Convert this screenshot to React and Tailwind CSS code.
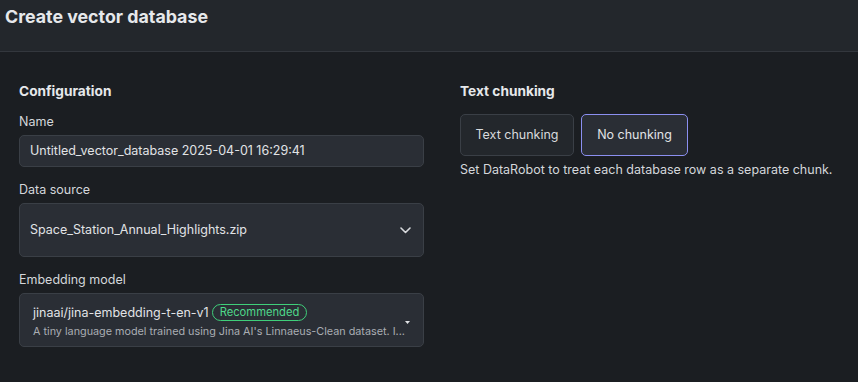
import React from "react";

export default function App() {
  return (
    <div className="w-[858px] h-[382px] bg-[#1b1e22] text-[#e3e5e8] overflow-hidden" style={{ fontFamily: "Inter, 'Noto Sans', sans-serif" }}>
      <div className="h-[52px] bg-[#23272c] border-b border-[#33373d] flex items-start pl-[5px] pt-[4px]">
        <h1 className="text-[17.8px] leading-[26px] font-bold text-[#e6e8eb]">Create vector database</h1>
      </div>
      <div className="flex pl-[19px] pt-[30px]">
        <div className="w-[405px] flex flex-col">
          <div className="text-[13.7px] leading-[18px] font-bold text-[#e6e8eb]">Configuration</div>
          <label className="mt-[13px] text-[12.5px] leading-[18px] text-[#d4d7db]">Name</label>
          <div className="mt-[4px] h-[32px] rounded-[5px] bg-[#2a2e35] border border-[#3a3f46] flex items-center px-[10px] text-[12.5px] text-[#e1e3e6]">
            Untitled_vector_database 2025-04-01 16:29:41
          </div>
          <label className="mt-[14px] text-[12.5px] leading-[18px] text-[#d4d7db]">Data source</label>
          <div className="mt-[4px] h-[54px] rounded-[5px] bg-[#2a2e35] border border-[#3a3f46] flex items-center justify-between pl-[10px] pr-[12px] text-[12.5px] text-[#e1e3e6]">
            <span>Space_Station_Annual_Highlights.zip</span>
            <svg width="11" height="7" viewBox="0 0 11 7" fill="none">
              <path d="M1 1l4.5 4.5L10 1" stroke="#d8dadd" strokeWidth="1.6" strokeLinecap="round" strokeLinejoin="round" />
            </svg>
          </div>
          <label className="mt-[14px] text-[12.5px] leading-[18px] text-[#d4d7db]">Embedding model</label>
          <div className="mt-[4px] h-[54px] rounded-[5px] bg-[#2a2e35] border border-[#3a3f46] flex items-center justify-between pl-[13px] pr-[13px] pt-[3px]">
            <div className="flex flex-col min-w-0">
              <div className="flex items-center gap-[3px] text-[12.5px] leading-[18px] text-[#e1e3e6]">
                <span>jinaai/jina-embedding-t-en-v1</span>
                <span className="border border-[#3fcf7a] text-[#4fd88a] rounded-full px-[7px] text-[11.2px] leading-[15px]">Recommended</span>
              </div>
              <div className="text-[10.8px] leading-[16px] text-[#a9adb3] mt-[2px] whitespace-nowrap">
                A tiny language model trained using Jina AI's Linnaeus-Clean dataset. I...
              </div>
            </div>
            <svg width="5" height="3" viewBox="0 0 5 3" className="mt-[2px]">
              <path d="M0 0h5L2.5 3z" fill="#e1e3e6" />
            </svg>
          </div>
        </div>
        <div className="ml-[36px] flex flex-col">
          <div className="text-[13.7px] leading-[18px] font-bold text-[#e6e8eb]">Text chunking</div>
          <div className="mt-[14px] flex gap-[7px]">
            <div className="h-[42px] w-[114px] rounded-[5px] bg-[#23272c] border border-[#3a3f46] flex items-center justify-center text-[12.5px] text-[#d8dadd]">Text chunking</div>
            <div className="h-[42px] w-[107px] rounded-[5px] bg-[#2a2e35] border border-[#8b8ff0] flex items-center justify-center text-[12.5px] text-[#e1e3e6]">No chunking</div>
          </div>
          <div className="mt-[5px] text-[12.5px] leading-[18px] text-[#d4d7db]">Set DataRobot to treat each database row as a separate chunk.</div>
        </div>
      </div>
    </div>
  );
}
